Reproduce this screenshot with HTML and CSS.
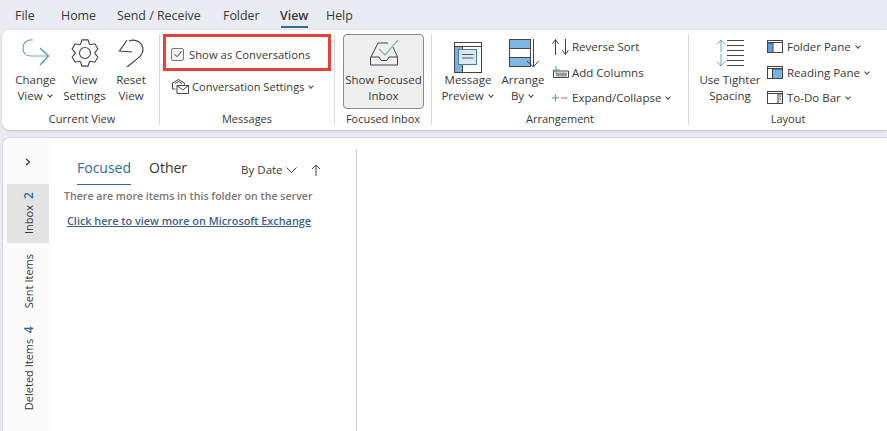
FILE: index.html
```html
<!DOCTYPE html>
<html lang="en">
<head>
<meta charset="utf-8">
<title>Outlook View</title>
<link rel="stylesheet" href="styles.css">
</head>
<body>
<nav class="tabs">
  <span class="tab t-file">File</span><span class="tab t-home">Home</span><span class="tab t-send">Send / Receive</span><span class="tab t-folder">Folder</span><span class="tab active t-view">View</span><span class="tab t-help">Help</span>
</nav>
<section class="ribbon">
  <div class="group g-view">
    <div class="tools">
      <div class="big b-change">
        <svg class="ico" width="28" height="28" viewBox="0 0 28 28" fill="none"><path d="M11 1C5 0 1 4 1 9C1 14 4 17 9 17H26" stroke="#6fa8cf" stroke-width="1.200"/><path d="M18 9 26.500 17 18 26" stroke="#4f8db8" stroke-width="1.200"/></svg>
        <span>Change<br>View <i class="chev"></i></span>
      </div>
      <div class="big b-settings">
        <svg class="ico" width="28" height="28" viewBox="0 0 28 28" fill="none" stroke="#444" stroke-width="1.100"><circle cx="14" cy="14" r="5.500"/><path d="M17.040 .85 18.380 5.010 19.590 5.710 23.870 4.790 26.900 10.050 23.980 13.300V14.700L26.900 17.950 23.870 23.210 19.590 22.290 18.380 22.990 17.040 27.150H10.960L9.620 22.990 8.410 22.290 4.130 23.210 1.100 17.950 4.020 14.700V13.300L1.100 10.050 4.130 4.790 8.410 5.710 9.620 5.010 10.960 .85Z"/></svg>
        <span>View<br>Settings</span>
      </div>
      <div class="big b-reset">
        <svg class="ico" width="26" height="28" viewBox="0 0 26 28" fill="none" stroke="#444" stroke-width="1.200"><path d="M9 1 1.500 12 14 13"/><path d="M11 2C18-1 25 4 25 11 25 16 20 19 9 28"/></svg>
        <span>Reset<br>View</span>
      </div>
    </div>
    <div class="label l-view">Current View</div>
  </div>
  <div class="group g-msg">
    <div class="tools msg-col">
      <div class="row r-show">
        <span class="check"><svg width="10" height="10" viewBox="0 0 10 10" fill="none" stroke="#333"><path d="M1.500 5.200 4 7.700 8.800 2.300"/></svg></span>
        <span>Show as Conversations</span>
      </div>
      <div class="row r-conv">
        <svg width="17" height="15" viewBox="0 0 17 15" fill="none" stroke="#444"><path d="M3.500 10H.5V4L6.500 .5 12.500 4V5.500"/><path d="M3 4.500 6.500 2.500 10 4.500"/><path d="M5 14.500V6.500H16.500V14.500ZM5 6.500 10.750 11 16.500 6.500"/></svg>
        <span>Conversation Settings <i class="chev"></i></span>
      </div>
    </div>
    <div class="label">Messages</div>
  </div>
  <div class="group g-focus">
    <div class="tools">
      <div class="big pressed">
        <svg class="ico" width="28" height="27" viewBox="0 0 28 27" fill="none"><path d="M1 18 8 4H18M23 8 27.500 18" stroke="#444"/><path d="M.5 18V26H27.500V18H19L17 21.500H11L9 18Z" stroke="#444"/><path d="M9 10 15 16 28 1" stroke="#8dbf9f" stroke-width="1.400"/></svg>
        <span>Show Focused<br>Inbox</span>
      </div>
    </div>
    <div class="label">Focused Inbox</div>
  </div>
  <div class="group g-arr">
    <div class="tools">
      <div class="big b-preview">
        <svg class="ico" width="28" height="31" viewBox="0 0 28 31" fill="none"><rect x=".5" y=".5" width="27" height="30" fill="#fff" stroke="#444"/><path d="M.5 4.500H27.500" stroke="#444"/><rect x=".5" y="4.500" width="8" height="26" fill="#7fb0dd" stroke="#444"/><rect x="4.500" y="7.500" width="18" height="15" fill="#dbe9f6" stroke="#3f7fae"/><path d="M8 12.500H19.500M8 16H19.500" stroke="#555"/></svg>
        <span>Message<br>Preview <i class="chev"></i></span>
      </div>
      <div class="big b-arrange">
        <svg class="ico" width="30" height="28" viewBox="0 0 30 28" fill="none"><rect x=".5" y=".5" width="21" height="9" fill="#7fb6e6" stroke="#444"/><rect x=".5" y="9.500" width="21" height="9" fill="#fff" stroke="#444"/><rect x=".5" y="18.500" width="21" height="9" fill="#7fb6e6" stroke="#444"/><path d="M24.500 0V28M18 22 24.500 28 29.500 22" stroke="#444"/></svg>
        <span>Arrange<br>By <i class="chev"></i></span>
      </div>
      <div class="stack s-arr">
        <div class="row"><svg width="17" height="16" viewBox="0 0 17 16" fill="none" stroke="#444"><path d="M3.500 16V.5M.5 5 3.500 .5 6.500 5M13.500 0V15.500M10 11 13.500 15.500 16.500 11"/></svg><span>Reverse Sort</span></div>
        <div class="row"><svg width="17" height="13" viewBox="0 0 17 13" fill="none"><path d="M1.500 5H16.500V11.500H1.500Z" stroke="#444"/><rect x="4" y="6.500" width="11" height="4" fill="#999"/><path d="M.5 4H8M4 0V8" stroke="#4fa26f"/></svg><span>Add Columns</span></div>
        <div class="row"><svg width="17" height="10" viewBox="0 0 17 10" fill="none"><path d="M0 5H7M3.500 1.500V8.500" stroke="#4fa26f"/><path d="M9 5H15.500" stroke="#c9605a"/></svg><span>Expand/Collapse <i class="chev"></i></span></div>
      </div>
    </div>
    <div class="label">Arrangement</div>
  </div>
  <div class="group g-layout">
    <div class="tools">
      <div class="big b-tight">
        <svg class="ico" width="28" height="28" viewBox="0 0 28 28" fill="none"><path d="M5 1V13M1 5.500 5 1 9 5.500M5 15V27M1 22.500 5 27 9 22.500" stroke="#6aa5cf"/><path d="M11 1.500H28M11 6.500H28M11 11.500H28M11 16.500H28M11 21.500H28M11 26.500H28" stroke="#444"/></svg>
        <span>Use Tighter<br>Spacing</span>
      </div>
      <div class="stack s-layout">
        <div class="row"><svg width="16" height="13" viewBox="0 0 16 13"><rect x=".5" y=".5" width="15" height="12" fill="#fff" stroke="#444"/><rect x=".5" y="3" width="5.500" height="9.500" fill="#5f9ed8" stroke="#444"/><path d="M.5 2.500H15.500" stroke="#444"/></svg><span>Folder Pane <i class="chev"></i></span></div>
        <div class="row"><svg width="16" height="13" viewBox="0 0 16 13"><rect x=".5" y=".5" width="15" height="12" fill="#fff" stroke="#444"/><rect x="5.500" y="3" width="10" height="9.500" fill="#73b3ec" stroke="#444"/><path d="M.5 2.500H15.500" stroke="#444"/></svg><span>Reading Pane <i class="chev"></i></span></div>
        <div class="row"><svg width="16" height="13" viewBox="0 0 16 13"><rect x=".5" y=".5" width="15" height="12" fill="#fff" stroke="#444"/><rect x="11" y="3" width="4.500" height="9.500" fill="#dbe9f6" stroke="#444"/><path d="M.5 2.500H15.500M13.200 4.500V6M13.200 7.500V9" stroke="#444"/></svg><span>To-Do Bar <i class="chev"></i></span></div>
      </div>
    </div>
    <div class="label">Layout</div>
  </div>
</section>
<main class="main">
  <aside class="rail">
    <div class="expand"><svg width="6" height="8" viewBox="0 0 6 8" fill="none" stroke="#444" stroke-width="1.400"><path d="M1 1 4.500 4 1 7"/></svg></div>
    <div class="rail-item selected"><span>Inbox <b>2</b></span></div>
    <div class="rail-item sent"><span>Sent Items</span></div>
    <div class="rail-item"><span>Deleted Items <b>4</b></span></div>
  </aside>
  <section class="list">
    <div class="list-head">
      <span class="pivot on">Focused</span>
      <span class="pivot">Other</span>
      <span class="sort">By Date <svg width="11" height="7" viewBox="0 0 11 7" fill="none" stroke="#444"><path d="M.5 .5 5.500 5.500 10.500 .5"/></svg></span>
      <svg class="up" width="10" height="12" viewBox="0 0 10 12" fill="none" stroke="#444"><path d="M5 12V1M1 5 5 1 9 5"/></svg>
    </div>
    <p class="more">There are more items in this folder on the server</p>
    <a class="link" href="#">Click here to view more on Microsoft Exchange</a>
  </section>
  <section class="reading"></section>
</main>
<div class="callout"></div>
</body>
</html>
```
FILE: styles.css
```css
* { box-sizing: border-box; }
html, body { margin: 0; height: 100%; overflow: hidden; }
body {
  width: 887px; height: 431px;
  background: #e9edf3;
  font-family: "Open Sans", "Noto Sans", sans-serif;
  font-size: 11.5px;
  color: #383838;
  display: flex; flex-direction: column;
  position: relative;
}
.tabs { height: 30px; flex: none; display: flex; padding-left: 15px; font-size: 12.4px; }
.tab { padding-top: 8px; height: 28px; line-height: 16px; white-space: nowrap; }
.t-file { width: 46px; }
.t-home { width: 56px; }
.t-send { width: 106px; }
.t-folder { width: 57px; }
.t-view { width: 46px; }
.tab.active { font-weight: 600; position: relative; }
.tab.active::after { content: ""; position: absolute; left: 1px; width: 27px; bottom: 0; height: 2px; background: #2c6c9e; }
.ribbon {
  flex: none; height: 100px; margin-left: 2px; background: #fff;
  border-radius: 8px 0 0 8px;
  box-shadow: 0 1px 3px rgba(0,0,0,.18);
  display: flex; padding-top: 4px;
}
.group { display: flex; flex-direction: column; height: 91px; border-right: 1px solid #d9d9d9; flex: none; }
.g-view { width: 158px; }
.g-msg { width: 175px; }
.g-focus { width: 97px; }
.g-arr { width: 257px; }
.g-layout { border-right: 0; width: 198px; }
.tools { flex: none; height: 78px; display: flex; }
.label { height: 13px; line-height: 13px; text-align: center; font-size: 11px; white-space: nowrap; }
.l-view { padding-left: 3px; }
.big { display: flex; flex-direction: column; align-items: center; text-align: center; line-height: 16px; white-space: nowrap; flex: none; }
.big .ico { margin: 5px 0; flex: none; }
.b-change { margin-left: 13px; width: 41px; }
.b-settings { margin-left: 6.500px; width: 44px; }
.b-reset { margin-left: 9.500px; width: 30px; }
.chev { display: inline-block; width: 4px; height: 4px; border-right: 1px solid #444; border-bottom: 1px solid #444; transform: rotate(45deg); margin: 0 2px 3px 2px; }
.msg-col { flex-direction: column; padding-left: 3px; }
.row { display: flex; align-items: center; white-space: nowrap; gap: 5px; }
.r-show { height: 34px; padding-left: 8px; gap: 5px; margin-top: 3px; font-size: 11.300px; }
.check { width: 13px; height: 13px; border: 1px solid #777; border-radius: 2px; background: #f6f6f6; display: flex; align-items: center; justify-content: center; }
.r-conv { height: 26px; padding-left: 9px; margin-top: 2px; gap: 3px; font-size: 11.100px; }
.pressed { margin: 0 0 0 8px; width: 81px; height: 75px; background: #efefef; border: 1px solid #8a8a8a; border-radius: 4px; }
.pressed .ico { margin: 4px 0 3px; }
.pressed span { margin-top: 3px; }
.b-preview { margin-left: 11px; width: 50px; }
.b-preview .ico { margin: 8px 0 -1px; }
.b-arrange { margin-left: 8px; width: 44px; }
.b-arrange .ico { margin-left: 1px; }
.stack { display: flex; flex-direction: column; }
.stack .row { height: 25.500px; gap: 3px; }
.stack .row svg { flex: none; }
.s-arr { margin-left: 7px; }
.s-layout { margin-left: 6px; }
.s-layout .row { gap: 4px; }
.b-tight { margin-left: 10px; width: 62px; }
.main {
  flex: 1; margin: 7px 0 0 2px; background: #fff;
  border-top: 1px solid #d4d7db; border-left: 1px solid #d4d7db;
  border-radius: 8px 0 0 0;
  display: flex; min-height: 0;
}
.rail { width: 46px; flex: none; padding-left: 4px; background: #fbfbfb; display: flex; flex-direction: column; border-radius: 8px 0 0 0; }
.expand { height: 46px; display: flex; align-items: center; justify-content: center; padding-top: 2px; }
.rail-item { display: flex; justify-content: center; padding: 9px 0 9px 1px; }
.rail-item.selected { background: #e3e3e3; height: 59px; }
.rail-item.sent { padding-top: 11px; }
.rail-item span { writing-mode: vertical-rl; transform: rotate(180deg); font-size: 11px; white-space: nowrap; line-height: 16px; }
.rail-item b { color: #2c6c9e; font-size: 12px; font-weight: 600; margin-top: 3px; display: inline-block; }
.list { width: 308px; flex: none; padding: 9px 0 0 15px; border-right: 1px solid #d0d0d0; margin-top: 11px; }
.list-head { display: flex; align-items: flex-start; height: 30px; padding-left: 13px; }
.pivot { font-size: 14px; line-height: 20px; padding-bottom: 6px; margin-right: 18px; color: #333; }
.pivot.on { color: #2c6c9e; border-bottom: 1px solid #2c6c9e; }
.sort { margin-left: 36px; font-size: 11.500px; line-height: 16px; margin-top: 4px; }
.up { margin: 6px 0 0 14px; }
.more { margin: 0; font-size: 10.600px; font-weight: 600; color: #7a7676; line-height: 16px; }
.link { display: block; margin: 9px 0 0 3px; font-size: 10.850px; font-weight: 600; color: #3f5f86; line-height: 16px; }
.reading { flex: 1; }
.callout { position: absolute; left: 163px; top: 34px; width: 168px; height: 37px; border: 3px solid #e8413d; }
```
